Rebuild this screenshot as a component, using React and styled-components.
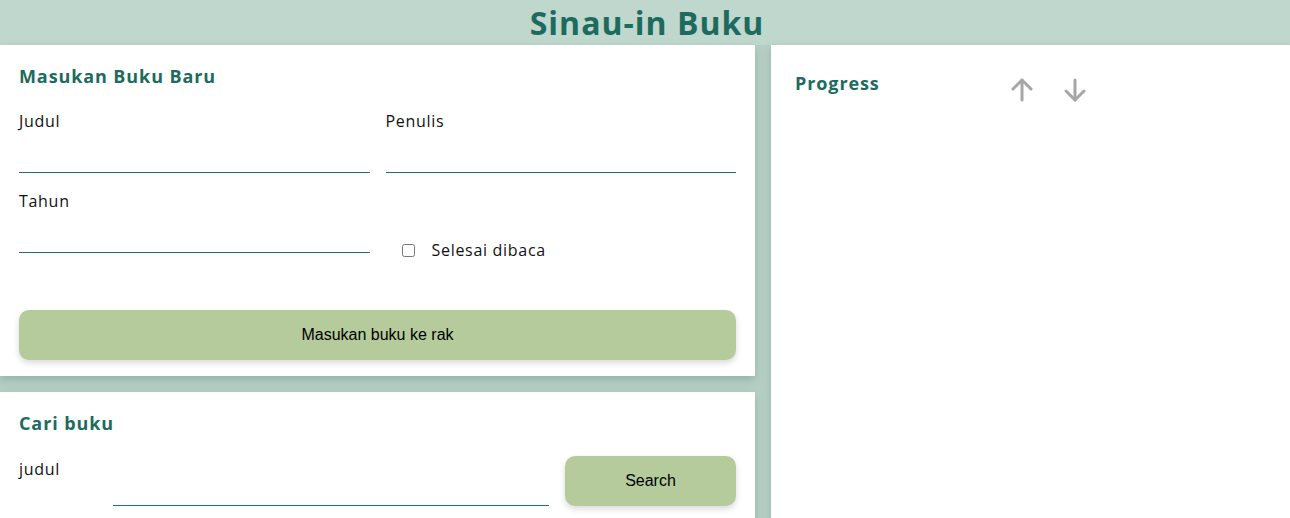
import React from "react";
import styled, { createGlobalStyle } from "styled-components";

const GlobalStyle = createGlobalStyle`
  * { box-sizing: border-box; }
  html, body { margin: 0; padding: 0; }
  body {
    background: #b6cfc5;
    font-family: "Open Sans", "Noto Sans", sans-serif;
    color: #000;
    overflow: hidden;
  }
`;

const Page = styled.div`
  min-height: 518px;
  display: flex;
  flex-direction: column;
`;

const Header = styled.header`
  height: 45px;
  background: #bfd7cc;
  display: flex;
  align-items: center;
  justify-content: center;
`;

const Title = styled.h1`
  margin: 0 0 0 4px;
  font-size: 32px;
  font-weight: 700;
  letter-spacing: 1px;
  color: #1d6b5e;
  line-height: 45px;
`;

const Main = styled.main`
  display: grid;
  grid-template-columns: 755px 1fr;
  gap: 16px;
  flex: 1;
`;

const Column = styled.div`
  display: flex;
  flex-direction: column;
  gap: 16px;
`;

const Card = styled.section`
  background: #fff;
  padding: ${(p) => p.$pad || "18px 19px 16px"};
  box-shadow: 0 4px 8px rgba(90, 130, 115, 0.35);
  flex: ${(p) => (p.$grow ? 1 : "none")};
`;

const Heading = styled.h2`
  margin: 0;
  font-size: 18px;
  font-weight: 700;
  letter-spacing: 0.9px;
  color: #1d6b5e;
  line-height: 27px;
`;

const FormGrid = styled.div`
  display: grid;
  grid-template-columns: 1fr 1fr;
  column-gap: 16px;
  row-gap: 16px;
  margin-top: 19px;
`;

const Field = styled.div`
  display: flex;
  flex-direction: column;
`;

const Label = styled.label`
  font-size: 16px;
  letter-spacing: 0.7px;
  line-height: 24px;
  margin-bottom: 8px;
  color: #111;
`;

const TextInput = styled.input`
  border: none;
  border-bottom: 1px solid #2b6c68;
  height: 32px;
  outline: none;
  font: inherit;
  background: transparent;
  width: 100%;
`;

const CheckRow = styled.label`
  display: flex;
  align-items: center;
  gap: 17px;
  padding-left: 16px;
  align-self: end;
  height: 24px;
  margin-bottom: -9px;
  font-size: 16px;
  letter-spacing: 0.7px;
  color: #111;
`;

const Checkbox = styled.input`
  margin: 0;
  width: 13px;
  height: 13px;
`;

const Button = styled.button`
  height: 50px;
  border: none;
  border-radius: 10px;
  background: #b5cb9b;
  box-shadow: 0 3px 6px rgba(0, 0, 0, 0.15);
  font-family: "Liberation Sans", Arial, sans-serif;
  font-size: 16px;
  color: #000;
  width: ${(p) => p.$width || "100%"};
  flex: none;
`;

const SubmitWrap = styled.div`
  margin-top: 57px;
`;

const SearchRow = styled.div`
  display: flex;
  align-items: flex-start;
  gap: 16px;
  margin-top: 19px;
`;

const SearchLabel = styled.label`
  width: 78px;
  font-size: 16px;
  letter-spacing: 0.7px;
  line-height: 24px;
  padding-top: 1px;
  color: #111;
`;

const SearchInput = styled(TextInput)`
  flex: 1;
  height: 50px;
`;

const ProgressBar = styled.div`
  display: flex;
  align-items: flex-start;
`;

const ProgressTitle = styled(Heading)`
  width: 215px;
`;

const SortButtons = styled.div`
  display: flex;
  gap: 29px;
  margin-top: 7px;
`;

const IconButton = styled.button`
  border: none;
  background: none;
  padding: 0;
  width: 24px;
  height: 26px;
  color: #a6a6a6;
  display: flex;
`;

const Arrow = ({ down }) => (
  <svg width="24" height="26" viewBox="0 0 24 26" fill="none" stroke="currentColor" strokeWidth="3" strokeLinecap="round" strokeLinejoin="round">
    {down ? (
      <>
        <path d="M12 3v20" />
        <path d="M3 14l9 9 9-9" />
      </>
    ) : (
      <>
        <path d="M12 23V3" />
        <path d="M3 12l9-9 9 9" />
      </>
    )}
  </svg>
);

export default function App() {
  return (
    <Page>
      <GlobalStyle />
      <Header>
        <Title>Sinau-in Buku</Title>
      </Header>
      <Main>
        <Column>
          <Card>
            <Heading>Masukan Buku Baru</Heading>
            <FormGrid>
              <Field>
                <Label htmlFor="judul">Judul</Label>
                <TextInput id="judul" type="text" />
              </Field>
              <Field>
                <Label htmlFor="penulis">Penulis</Label>
                <TextInput id="penulis" type="text" />
              </Field>
              <Field>
                <Label htmlFor="tahun">Tahun</Label>
                <TextInput id="tahun" type="number" />
              </Field>
              <CheckRow>
                <Checkbox type="checkbox" />
                Selesai dibaca
              </CheckRow>
            </FormGrid>
            <SubmitWrap>
              <Button type="submit">Masukan buku ke rak</Button>
            </SubmitWrap>
          </Card>
          <Card $grow>
            <Heading>Cari buku</Heading>
            <SearchRow>
              <SearchLabel htmlFor="cari">judul</SearchLabel>
              <SearchInput id="cari" type="text" />
              <Button $width="171px" type="button">Search</Button>
            </SearchRow>
          </Card>
        </Column>
        <Card $pad="25px 24px">
          <ProgressBar>
            <ProgressTitle>Progress</ProgressTitle>
            <SortButtons>
              <IconButton aria-label="naik"><Arrow /></IconButton>
              <IconButton aria-label="turun"><Arrow down /></IconButton>
            </SortButtons>
          </ProgressBar>
        </Card>
      </Main>
    </Page>
  );
}
